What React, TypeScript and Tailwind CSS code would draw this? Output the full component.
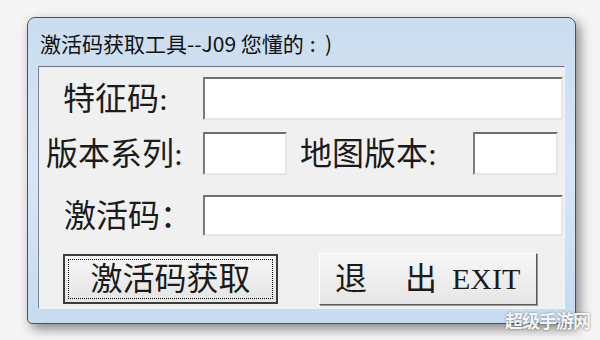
import React from "react";

const font = "font-['Liberation_Serif','Noto_Sans_CJK_SC',serif]";

const App = () => {
  return (
    <div className="relative w-[600px] h-[340px] overflow-hidden bg-[#f4f4f4] pl-[27px] pt-[17px]">
      {/* window frame */}
      <div className="flex h-[307px] w-[549px] flex-col rounded-t-[8px] rounded-b-[5px] border border-[#4a5360] bg-gradient-to-b from-[#cadcef] via-[#d6e6f6] to-[#c7dbef] px-[10px] shadow-[4px_5px_12px_rgba(0,0,0,0.45)]">
        {/* title */}
        <div className="flex h-[48px] items-center pl-[2px] pt-[2px]">
          <span className="whitespace-pre font-['Noto_Sans_CJK_SC',sans-serif] text-[21px] leading-none text-[#111]">
            激活码获取工具--J09 您懂的<span className="ml-[6px]">:</span>  )
          </span>
        </div>

        {/* client area */}
        <div className={`flex h-[243px] w-[527px] flex-col border border-t-[#6a7481] border-l-[#7d8793] border-r-[#eef3f8] border-b-[#eef3f8] bg-[#f0f0f0] pt-[10px] ${font} text-[#1b1b1b]`}>
          <div className="flex h-[43px] items-center pl-[24px]">
            <div className="w-[140px] text-[32px] leading-none">特征码:</div>
            <Input className="w-[360px]" />
          </div>

          <div className="mt-[12px] flex h-[43px] items-center pl-[7px]">
            <div className="w-[157px] text-[32px] leading-none">版本系列:</div>
            <Input className="w-[84px]" />
            <div className="ml-[13px] w-[173px] text-[32px] leading-none">地图版本:</div>
            <Input className="w-[85px]" />
          </div>

          <div className="mt-[20px] flex h-[41px] items-center pl-[25px]">
            <div className="w-[139px] text-[32px] leading-none">激活码：</div>
            <Input className="w-[360px]" />
          </div>

          {/* buttons */}
          <div className="mt-[17px] flex items-center pl-[24px]">
            <button className="flex h-[50px] w-[215px] items-center justify-center border-2 border-[#3c3c3c] bg-gradient-to-b from-[#f6f6f6] to-[#e4e4e4] p-[3px]">
              <div className="flex h-full w-full items-center justify-center border border-dotted border-black text-[32px] leading-none">
                激活码获取
              </div>
            </button>
            <button className="ml-[41px] flex h-[52px] w-[218px] items-center border border-t-[#fdfdfd] border-l-[#fdfdfd] border-r-[#5a5a5a] border-b-[#5a5a5a] bg-gradient-to-b from-[#f6f6f6] to-[#e6e6e6] pl-[15px] shadow-[1px_1px_0_#9a9a9a]">
              <span className="text-[32px] leading-none">退</span>
              <span className="ml-[38px] text-[32px] leading-none">出</span>
              <span className="ml-[15px] text-[30px] leading-none">EXIT</span>
            </button>
          </div>
        </div>
      </div>

      {/* watermark */}
      <div className="absolute left-[505px] top-[311px] font-['Noto_Sans_CJK_SC',sans-serif] text-[18px] font-bold leading-none tracking-[-1px] text-[#f4f4f4] [text-shadow:0_0_2px_rgba(0,0,0,0.5)]">
        超级手游网
      </div>
    </div>
  );
};

export default App;

const Input = ({ className }: { className: string }) => {
  return (
    <div
      className={`h-full border-2 border-t-[#6f6f6f] border-l-[#7a7a7a] border-r-[#e6e6e6] border-b-[#e6e6e6] bg-white ${className}`}
    />
  );
};
